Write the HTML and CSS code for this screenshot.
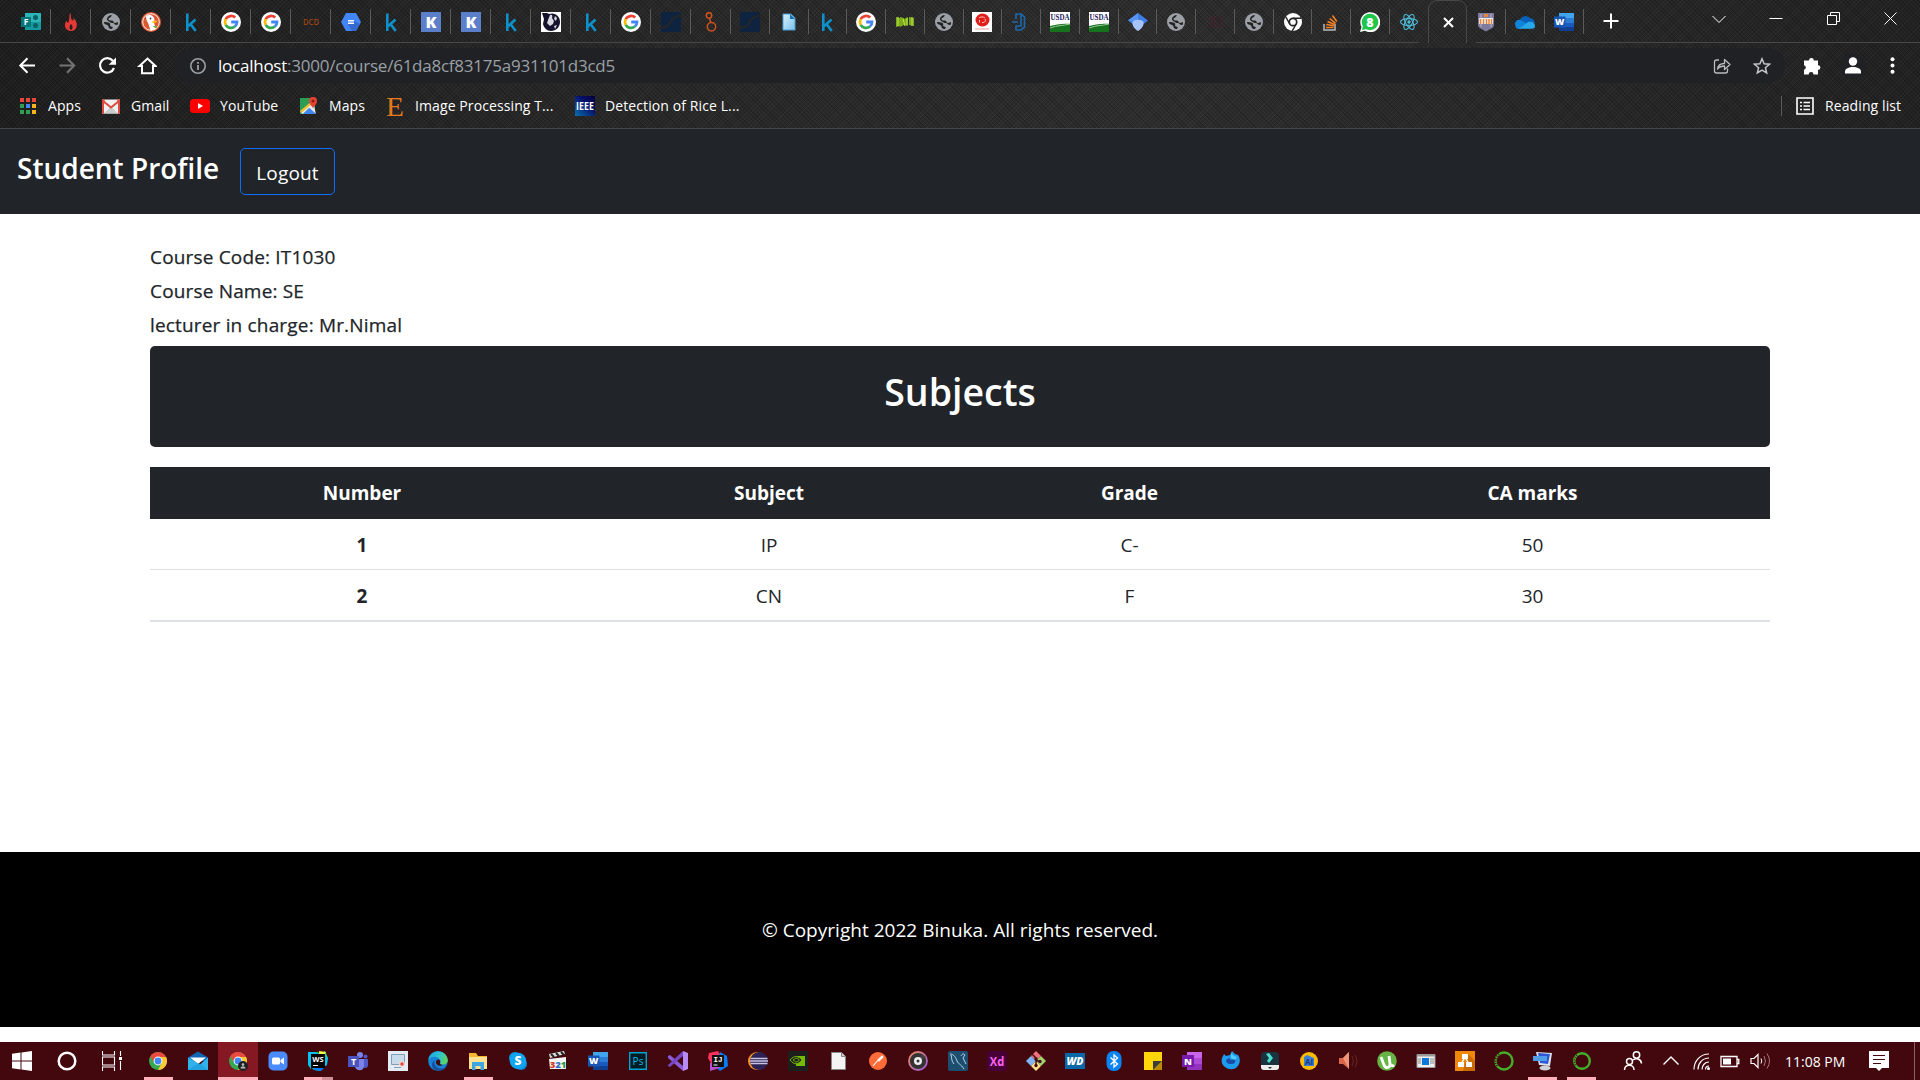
FILE: index.html
```html
<!DOCTYPE html>
<html lang="en">
<head>
<meta charset="utf-8">
<title>Student Profile</title>
<link rel="stylesheet" href="styles.css">
</head>
<body>
<svg class="sprite" aria-hidden="true">
  <defs>
    <linearGradient id="gSky" x1="0" y1="0" x2="1" y2="1"><stop offset="0" stop-color="#d8f1ff"/><stop offset="1" stop-color="#79bfe8"/></linearGradient>
    <linearGradient id="gEdge" x1="0" y1="0.2" x2="1" y2="0.6"><stop offset="0" stop-color="#1fa0dd"/><stop offset=".5" stop-color="#2cc3d2"/><stop offset="1" stop-color="#5fd65a"/></linearGradient>
    <linearGradient id="gIeee" x1="0" y1="1" x2="1" y2="0"><stop offset="0" stop-color="#0a70b0"/><stop offset=".6" stop-color="#06106a"/><stop offset="1" stop-color="#02023c"/></linearGradient>
    <linearGradient id="gRing" x1="0" y1="0" x2="1" y2="1"><stop offset="0" stop-color="#ef8a5a"/><stop offset="1" stop-color="#9a5ae0"/></linearGradient>
  </defs>
</svg>
<svg class="symbols" aria-hidden="true">
  <symbol id="kaggle" viewBox="0 0 20 20"><path d="M6.300 1.500V19M14.500 7.500L7 14.200M9.500 12l5.200 7" fill="none" stroke="#0e90ca" stroke-width="2.600"/></symbol>
  <symbol id="google" viewBox="0 0 20 20"><circle cx="10" cy="10" r="10" fill="#fff"/><g fill="none" stroke-width="2.800"><path d="M14.200 5.600A6 6 0 0 0 4.700 7.200" stroke="#ea4335"/><path d="M4.700 7.200a6 6 0 0 0 0 5.600" stroke="#fbbc05"/><path d="M4.700 12.800a6 6 0 0 0 9.200 1.700" stroke="#34a853"/><path d="M13.900 14.500A6 6 0 0 0 16 10h-5.800" stroke="#4285f4"/></g></symbol>
  <symbol id="globe" viewBox="0 0 20 20"><circle cx="10" cy="10" r="9" fill="#9aa0a6"/><path d="M11 3c-1 1-.5 2-2 2.500S7 7 8 8s3 0 4 1 .5 2 2 2 2-1 3-1c0 1 0 2-.5 3l-2-.3c-1.500-.2-1-1.700-2.500-1.700s-2.500-.3-4-1.500C7 8.800 5.500 8 6 6.500S8 3 11 3zM3 10c2 0 4 0 5.500 1s0 2.500 1 3.200 2 0 2.300 1.300L11 17c-2 0-3-.5-3.500-2 .3-1.500-1-2-2.500-2.500-1.300-.4-2-1-2-2.500z" fill="#222"/></symbol>
  <symbol id="bigk" viewBox="0 0 20 20"><path fill="#5c7fcb" d="M0 0h20v20H0z"/><text x="10" y="15.600" font-size="16" font-weight="800" text-anchor="middle" fill="#fff">K</text></symbol>
  <symbol id="navy" viewBox="0 0 20 20"><path fill="#0d2340" d="M0 0h20v20H0z"/><path d="M0 15.500c5 0 7-1 9-5s5-6 11-7" fill="none" stroke="#262626" stroke-width="2.200"/></symbol>
  <symbol id="usda" viewBox="0 0 20 20"><path fill="#fff" d="M0 0h20v20H0z"/><text x="10" y="8" font-size="8" font-weight="700" textLength="19" lengthAdjust="spacingAndGlyphs" text-anchor="middle" class="serif" fill="#26225c">USDA</text><path d="M0 14c6-1 12-3 20-2v8H0z" fill="#16721c"/><path d="M0 16c8-3 12-2 20-4" stroke="#9bc79a" fill="none"/></symbol>
  <symbol id="word" viewBox="0 0 20 20"><path fill="#41a5ee" d="M5 1h15v5H5z"/><path fill="#2b7cd3" d="M5 6h15v5H5z"/><path fill="#185abd" d="M5 11h15v4H5z"/><path fill="#103f91" d="M5 15h15v4H5z"/><path fill="#1756b5" d="M0 4.500h11.500v11H0z"/><text x="5.700" y="13.300" font-size="9" font-weight="800" text-anchor="middle" fill="#fff">W</text></symbol>
  <symbol id="chrome" viewBox="0 0 20 20"><circle cx="10" cy="10" r="9" fill="#34a853"/><path d="M10 10L2.200 5.500a9 9 0 0 1 15.600 0z" fill="#ea4a3d"/><path d="M2.200 5.500L6.500 12 10 10z" fill="#ea4a3d"/><path d="M10 6h8.100A9 9 0 0 1 10 19l3.600-7z" fill="#fcc934"/><circle cx="10" cy="10" r="4.400" fill="#fff"/><circle cx="10" cy="10" r="3.400" fill="#4285f4"/></symbol>
</svg>

<header class="browser">
  <div class="tabstrip">
    <div class="tabs wide">
      <div class="tab"><svg viewBox="0 0 20 20"><path fill="#2bb5b9" d="M4 1h16v9H4z"/><path fill="#159aa0" d="M4 10h16v8H4z"/><circle cx="14.500" cy="5.500" r="2.500" fill="#0b5f66"/><circle cx="14.500" cy="13.500" r="2.500" fill="#0b5f66"/><path fill="#03757b" d="M0 5h10v10H0z"/><text x="5" y="13" font-size="8.500" font-weight="700" text-anchor="middle" fill="#fff">F</text></svg></div>
      <div class="tab"><svg viewBox="0 0 20 20"><path d="M9 1c2 3 0 5 2 7 1 1 2 0 1.500-2 3 3 4 6 3 9-1 3-3 4-5.500 4S4.500 17.500 4 14c-.3-2.500 1-4 1-5 1 .3 1.500 1.500 2 2C9 8 8 4 9 1z" fill="#e53935"/><path d="M10 12c2 2 2 5 0 6-2-1-2-4 0-6z" fill="#222"/></svg></div>
      <div class="tab"><svg><use href="#globe"/></svg></div>
      <div class="tab"><svg viewBox="0 0 20 20"><circle cx="10" cy="10" r="10" fill="#de5833"/><circle cx="10" cy="10" r="8.300" fill="none" stroke="#fff" stroke-width=".9"/><path d="M5 4c4-2.500 8-.5 8.500 3.500L13 11l2 6-5.500 1.500L7.500 12 5.500 8z" fill="#fff"/><path d="M11 9.500l5.500-1-1.200 2-3.800.6z" fill="#fcc20f"/><path d="M11.500 14.500l4-1v3z" fill="#5fb345"/><circle cx="9.500" cy="6.500" r=".9" fill="#25406a"/></svg></div>
      <div class="tab"><svg><use href="#kaggle"/></svg></div>
      <div class="tab"><svg><use href="#google"/></svg></div>
      <div class="tab"><svg><use href="#google"/></svg></div>
      <div class="tab"><svg viewBox="0 0 20 20"><text x="10" y="13" font-size="8.500" font-weight="600" textLength="16" lengthAdjust="spacingAndGlyphs" text-anchor="middle" fill="#9a4414">DCD</text></svg></div>
      <div class="tab"><svg viewBox="0 0 20 20"><path d="M5 1h10l5 9-5 9H5L0 10z" fill="#4285f4"/><path d="M13 9l6 3-4 7h-4l-4-7z" fill="#3569cf"/><path d="M7 8.700h6M7 11.300h6" stroke="#fff" stroke-width="1.500"/></svg></div>
      <div class="tab"><svg><use href="#kaggle"/></svg></div>
      <div class="tab"><svg><use href="#bigk"/></svg></div>
      <div class="tab"><svg><use href="#bigk"/></svg></div>
      <div class="tab"><svg><use href="#kaggle"/></svg></div>
      <div class="tab"><svg viewBox="0 0 20 20"><path fill="#fff" d="M0 0h20v20H0z"/><path d="M1 1h5l2 1c6-2 11 2 11 8 0 5-4 9-9 9-4 0-7-3-8-7L3 7z" fill="#14132b"/><path d="M9 3c2-1 3 1 2 3l2 3-1 3-3 2-3-3 1-3zM14 4l2 2-1 3-2-2zM13 14l3-1-2 4z" fill="#d7d8e2"/></svg></div>
      <div class="tab"><svg><use href="#kaggle"/></svg></div>
      <div class="tab"><svg><use href="#google"/></svg></div>
      <div class="tab"><svg><use href="#navy"/></svg></div>
      <div class="tab"><svg viewBox="0 0 20 20"><g fill="none" stroke="#d0531f" stroke-width="1.500"><circle cx="8" cy="3.500" r="2.700"/><circle cx="10.500" cy="14.800" r="4.200"/><path d="M8.500 6.200l1.300 4.400"/></g></svg></div>
    </div>
    <div class="tabs narrow">
      <div class="tab"><svg><use href="#navy"/></svg></div>
      <div class="tab"><svg viewBox="0 0 20 20"><path d="M4 2h8l4 4v12H4z" fill="url(#gSky)" stroke="#4b9fd0"/><path d="M11 2v5h5z" fill="#1272b4"/></svg></div>
      <div class="tab"><svg><use href="#kaggle"/></svg></div>
      <div class="tab"><svg><use href="#google"/></svg></div>
      <div class="tab"><svg viewBox="0 0 20 20"><path d="M1 5l4 1v8l-4 1zM5 5l4 1v7l-4 2zM9 7l4-2v9l-4-1zM14 5l5 1v8l-5-1z" fill="#7cab1c"/><path d="M3 5v9M8 7l2 7M12 6v7M17 5v9" stroke="#c1e34c"/></svg></div>
      <div class="tab"><svg><use href="#globe"/></svg></div>
      <div class="tab"><svg viewBox="0 0 20 20"><path fill="#fff" d="M0 0h20v20H0z"/><ellipse cx="10.500" cy="8" rx="7" ry="6.500" fill="#df1f1b"/><path d="M7 6c2-1.500 4-1.500 6 0M7.500 10.500V8M10 10.500c3 .5 4-2 3-3.500" stroke="#fbd5d2" stroke-width=".9" fill="none"/><path d="M3 17h14" stroke="#f4c0bd" stroke-width="1.500"/></svg></div>
      <div class="tab"><svg viewBox="0 0 20 20"><path d="M5 7V2h5l3.500 3v10L10 18H5v-4h5V2M1 10h6" fill="none" stroke="#1c67a9" stroke-width="1.700"/></svg></div>
      <div class="tab"><svg><use href="#usda"/></svg></div>
      <div class="tab"><svg><use href="#usda"/></svg></div>
      <div class="tab"><svg viewBox="0 0 20 20"><path d="M0 8.500L10 1l10 7.500-5 4H5z" fill="#3f7de8"/><path d="M10 1v9L0 8.500z" fill="#5a95f5"/><path d="M4.500 10c2-3 9-3 11 0 .5 4-2 7-5.500 9-3.500-2-6-5-5.500-9z" fill="#a5c4fb"/></svg></div>
      <div class="tab"><svg><use href="#globe"/></svg></div>
      <div class="tab"><svg viewBox="0 0 20 20"><text x="10" y="15" font-size="15" textLength="14" lengthAdjust="spacingAndGlyphs" text-anchor="middle" class="serif" fill="#4a1c2b">JEI</text></svg></div>
      <div class="tab"><svg><use href="#globe"/></svg></div>
      <div class="tab"><svg viewBox="0 0 20 20"><circle cx="10" cy="10" r="9" fill="#fff"/><circle cx="10" cy="10" r="3.700" fill="none" stroke="#222" stroke-width="1.700"/><path d="M10 6.300h8M6.800 12L2.800 5M13.200 12l-4 7" stroke="#222" stroke-width="1.500"/></svg></div>
      <div class="tab"><svg viewBox="0 0 20 20"><path d="M3 12v6h11v-6" fill="none" stroke="#bcbbbb" stroke-width="1.500"/><path d="M5 15.500h7.500M5.200 12.500l7.500 1.300M6.500 9.500l7 3M8.700 6.500l5.800 4.800M11.500 3.500l4.300 6" stroke="#f48024" stroke-width="1.600"/></svg></div>
      <div class="tab"><svg viewBox="0 0 20 20"><path d="M0 20l1.500-5A10 10 0 1 1 5 18.700z" fill="#fff"/><circle cx="10" cy="10" r="8.300" fill="#1fc64a"/><path d="M2 18l1-5 4 4z" fill="#1fc64a"/><text x="10" y="14.500" font-size="12.500" font-weight="800" text-anchor="middle" fill="#fff">8</text></svg></div>
    </div>
    <div class="tab last"><svg viewBox="0 0 20 20"><g fill="none" stroke="#50bdd8" stroke-width="1.100"><ellipse cx="10" cy="10" rx="8.500" ry="3.400"/><ellipse cx="10" cy="10" rx="8.500" ry="3.400" transform="rotate(60 10 10)"/><ellipse cx="10" cy="10" rx="8.500" ry="3.400" transform="rotate(120 10 10)"/></g><circle cx="10" cy="10" r="1.700" fill="#50bdd8"/></svg></div>
    <div class="tab active"><svg viewBox="0 0 20 20"><path d="M6 6l9 9M15 6l-9 9" stroke="#fff" stroke-width="2"/></svg></div>
    <div class="tabs after">
      <div class="tab"><svg viewBox="0 0 20 20"><path d="M2 1h16v12c0 3-4 4-8 6.500C6 17 2 16 2 13z" fill="#7e7b9e"/><path d="M5 2v13M15 2v13" stroke="#b7b4cd"/><path fill="#eee" d="M3 6h14v6H3z"/><path d="M4.500 7v5M7.500 7v5M10.500 7v5M13 7v5M15.500 7v5" stroke="#e8863c" stroke-width="1.500"/><path fill="#e8863c" d="M8 2h4v3H8z"/></svg></div>
      <div class="tab"><svg viewBox="0 0 20 20"><path d="M5 8a6 6 0 0 1 10-2c3 0 5 3 5 5l-8 3-9-1z" fill="#0a62b8"/><path d="M0 12a4 4 0 0 1 5-4l6 3-6 6H4c-2 0-4-2-4-5z" fill="#1184dc"/><path d="M4 16.700L13 10c4-1 7 1 7 4 0 2-1 2.700-3 2.700z" fill="#28a8ea"/></svg></div>
      <div class="tab"><svg><use href="#word"/></svg></div>
    </div>
    <svg class="newtab" viewBox="0 0 16 16"><path d="M8 .5v15M.5 8h15" stroke="#fff" stroke-width="2"/></svg>
    <div class="winctl">
      <svg viewBox="0 0 14 14"><path d="M.5 4L7 10.500 13.500 4" fill="none" stroke="#fff"/></svg>
      <svg viewBox="0 0 14 14"><path d="M.5 6.500h13" stroke="#fff"/></svg>
      <svg viewBox="0 0 14 14"><path d="M1.500 3.500h9v9h-9zM4.500 3.500v-3h9v9h-3" fill="none" stroke="#fff"/></svg>
      <svg viewBox="0 0 14 14"><path d="M1.500.5l12 12M13.500.5l-12 12" stroke="#fff"/></svg>
    </div>
  </div>

  <div class="toolbar">
    <div class="nav">
      <svg viewBox="0 0 20 20"><path d="M18 9.500H3.500M10.500 2.300L3.300 9.500l7.200 7.200" fill="none" stroke="#fff" stroke-width="2"/></svg>
      <svg viewBox="0 0 20 20"><path d="M2.500 9.500H17M10 2.300l7.200 7.200-7.200 7.200" fill="none" stroke="#747474" stroke-width="2"/></svg>
      <svg viewBox="0 0 20 20"><path d="M17 12a7.200 7.200 0 1 1-1-7" fill="none" stroke="#fff" stroke-width="2.200"/><path d="M19 1.500v7.300h-7.300z" fill="#fff"/></svg>
      <svg viewBox="0 0 20 20"><path d="M5 9.500v7.800h11V9.500M2.500 10l8-7.500 8 7.500z" fill="none" stroke="#fff" stroke-width="2"/><path d="M6 9h9v2.500H6z" fill="#222"/></svg>
    </div>
    <div class="omnibox">
      <svg class="info" viewBox="0 0 18 18"><circle cx="9" cy="9" r="7.200" fill="none" stroke="#9aa0a6" stroke-width="1.600"/><path d="M9 8v5M9 5v1.800" stroke="#9aa0a6" stroke-width="1.800"/></svg>
      <div class="url"><b>localhost</b>:3000/course/61da8cf83175a931101d3cd5</div>
      <svg class="share" viewBox="0 0 18 18"><path d="M6 3H3.500Q1.500 3 1.500 5v9q0 2 2 2h9q2 0 2-2v-2.500M4.500 12c.5-4 3-5.500 7-5.500v-4l5.500 5-5.500 5V9c-3 0-5 .5-7 3z" fill="none" stroke="#b9bbbe" stroke-width="1.300" stroke-linejoin="round"/></svg>
      <svg class="star" viewBox="0 0 18 18"><path d="M9 1.800l2.100 5 5.400.4-4.100 3.500 1.300 5.300L9 13.200 4.300 16l1.300-5.300-4.100-3.500 5.400-.4z" fill="none" stroke="#c3c5c8" stroke-width="1.500"/></svg>
    </div>
    <div class="actions">
      <svg viewBox="0 0 20 20"><path d="M2 4.500h5a2.300 2.300 0 1 1 4.800 0H16v4.700a2.300 2.300 0 1 1 0 4.800v4.500h-4.500a2.300 2.300 0 0 0-4.800 0H2v-4.800a2.300 2.300 0 0 0 0-4.500z" fill="#fff"/></svg>
      <svg class="avatar" viewBox="0 0 26 26"><circle cx="13" cy="13" r="13" fill="#202124"/><circle cx="13" cy="8.500" r="4.200" fill="#fff"/><path d="M5 20.500v-2c0-3 4-4.500 8-4.500s8 1.500 8 4.500v2z" fill="#fff"/></svg>
      <svg viewBox="0 0 20 20"><g fill="#fff"><circle cx="10.500" cy="3.300" r="2"/><circle cx="10.500" cy="9.500" r="2"/><circle cx="10.500" cy="15.700" r="2"/></g></svg>
    </div>
  </div>

  <div class="bookmarks">
    <div class="bm bm-apps"><svg viewBox="0 0 20 20"><g fill="#e8453c"><path d="M2 2h4v4H2zM8 2h4v4H8zM14 2h4v4h-4z"/></g><path fill="#2f9e50" d="M2 8h4v4H2zM2 14h4v4H2z"/><path fill="#4285f4" d="M8 8h4v4H8z"/><path fill="#2f9e50" d="M8 14h4v4H8z"/><path fill="#f6b51e" d="M14 8h4v4h-4zM14 14h4v4h-4z"/></svg><span>Apps</span></div>
    <div class="bm bm-gmail"><svg viewBox="0 0 20 20"><path fill="#f1f1f1" d="M1 3.500h18v14H1z"/><path fill="#ccc" d="M3 17.500l7-7 7 7z"/><path d="M2 17.500V5l8 6.500L18 5v12.500" fill="none" stroke="#dd4b3e" stroke-width="2"/><path fill="#dd4b3e" d="M1 3.500h3l-1 3zM19 3.500h-3l1 3z"/></svg><span>Gmail</span></div>
    <div class="bm bm-yt"><svg viewBox="0 0 20 20"><rect y="3" width="20" height="14" rx="3.500" fill="#f00"/><path d="M8 7l5 3-5 3z" fill="#fff"/></svg><span>YouTube</span></div>
    <div class="bm bm-maps"><svg viewBox="0 0 20 20"><path fill="#2c9d55" d="M1 2h15v16H1z"/><path fill="#e8eaed" d="M2 17L14 6l3 12-7-6-6 6z"/><path fill="#4285f4" d="M4 18l6.500-6 6.500 6z"/><path fill="#fbc02d" d="M1 15L13 5l1 2L2 17z"/><path d="M14 13c0-3-4-4-4-8a4 4 0 0 1 8 0c0 4-4 5-4 8z" fill="#e64335"/><circle cx="14" cy="5" r="1.500" fill="#8c1d18"/></svg><span>Maps</span></div>
    <div class="bm bm-image"><svg viewBox="0 0 20 20"><text x="10" y="19.500" font-size="28" textLength="18" lengthAdjust="spacingAndGlyphs" text-anchor="middle" class="serif" fill="#e37a1c">E</text></svg><span>Image Processing T...</span></div>
    <div class="bm bm-ieee"><svg viewBox="0 0 20 20"><path fill="url(#gIeee)" d="M0 0h20v20H0z"/><text x="10" y="14" font-size="11" font-weight="700" textLength="18" lengthAdjust="spacingAndGlyphs" text-anchor="middle" fill="#fff">IEEE</text></svg><span>Detection of Rice L...</span></div>
    <div class="bm bm-reading"><svg viewBox="0 0 20 20"><path d="M2 2h16v16H2z" fill="none" stroke="#fff" stroke-width="1.600"/><path d="M5 6.500h2M5 10h2M5 13.500h2M8.500 6.500H15M8.500 10H15M8.500 13.500H15" stroke="#fff" stroke-width="1.600"/></svg><span>Reading list</span></div>
  </div>
</header>

<nav class="appbar">
  <h1>Student Profile</h1>
  <button class="logout">Logout</button>
</nav>

<main class="content">
  <h5>Course Code: IT1030</h5>
  <h5>Course Name: SE</h5>
  <h5 class="lecturer">lecturer in charge: Mr.Nimal</h5>
  <div class="banner"><h2>Subjects</h2></div>
  <table>
    <colgroup><col class="c-number"><col class="c-subject"><col class="c-grade"><col class="c-marks"></colgroup>
    <thead><tr><th>Number</th><th>Subject</th><th>Grade</th><th>CA marks</th></tr></thead>
    <tbody>
      <tr><th>1</th><td>IP</td><td>C-</td><td>50</td></tr>
      <tr><th>2</th><td>CN</td><td>F</td><td>30</td></tr>
    </tbody>
  </table>
</main>

<footer class="footer"><p>© Copyright 2022 Binuka. All rights reserved.</p></footer>

<div class="taskbar">
  <div class="system">
    <svg viewBox="0 0 20 20"><path d="M0 2.800l8.500-1.200v8H0zM9.500 1.500L20 0v9.600H9.500zM0 10.500h8.500v8L0 17.300zM9.500 10.500H20V20L9.500 18.600z" fill="#fff"/></svg>
    <svg viewBox="0 0 20 20"><circle cx="10" cy="10" r="8.300" fill="none" stroke="#fff" stroke-width="2.500"/></svg>
    <svg viewBox="0 0 20 20"><path d="M.5 0v4h12V0M.5 20v-4h12v4M.5 6h12v8H.5zM18.500 0v5M18.500 10v9" fill="none" stroke="#fff" stroke-width="1.100"/><path fill="#fff" d="M17 6h3v3h-3z"/></svg>
  </div>
  <div class="apps pinned">
    <div class="app run"><svg><use href="#chrome"/></svg></div>
    <div class="app"><svg viewBox="0 0 20 20"><path fill="#0f66b4" d="M0 6.500L10 .5l10 6V10H0z"/><path fill="#fff" d="M2 6.500h16L10 13z"/><path fill="#2fb3ea" d="M0 6.500l12 7 8-7V19H0z"/><path fill="#1a94dc" d="M0 19L11 12l9 7z" opacity=".5"/></svg></div>
    <div class="app focus"><svg viewBox="0 0 20 20"><use href="#chrome"/><circle cx="15" cy="15" r="5" fill="#202124"/><path d="M12.500 17.500c0-3 5-3 5 0zM15 12.200a1.300 1.300 0 1 1 0 2.700 1.300 1.300 0 0 1 0-2.700" fill="#bbb"/></svg></div>
    <div class="app"><svg viewBox="0 0 20 20"><rect x=".5" y=".5" width="19" height="19" rx="5" fill="#4a8cff"/><rect x="4" y="6.500" width="8" height="7" rx="1.500" fill="#fff"/><path d="M12.500 9l3.500-2.500v7L12.500 11z" fill="#fff"/></svg></div>
    <div class="app run multi"><svg viewBox="0 0 20 20"><path fill="#21d789" d="M1 2l9-1 2 3 5-4 3 7-3 8-5 5-6-1-5-5z"/><path fill="#07c3f2" d="M0 1h7l5 2-9 15-3-4zM17 5l3 2-1 7-3 2z"/><path fill="#fcf84a" d="M11 0l7 1-2 4-5-1z"/><path fill="#087cfa" d="M5 16h12l-4 4-7-1z"/><path fill="#000" d="M3 3h14v14H3z"/><text x="10" y="10.500" font-size="7.500" font-weight="700" text-anchor="middle" fill="#fff">WS</text><path fill="#fff" d="M5 14h5v1H5z"/></svg></div>
    <div class="app"><svg viewBox="0 0 20 20"><circle cx="12" cy="4" r="3" fill="#7b83eb"/><circle cx="17.500" cy="5.500" r="2" fill="#5059c9"/><path fill="#5059c9" d="M13 8h7v6c0 3-3 4-5 2z"/><path fill="#7b83eb" d="M7 8h9v7c0 5-7 6-9 1z"/><path fill="#4b53bc" d="M0 5h11v11H0z"/><text x="5.500" y="14" font-size="9" font-weight="700" text-anchor="middle" fill="#fff">T</text></svg></div>
    <div class="app"><svg viewBox="0 0 20 20"><path fill="#e4ebf2" d="M0 0h20v20H0z"/><path d="M3.500 3.500h13v10h-13zM6 16.500h7" fill="#c7dbea" stroke="#7f9fb8"/><circle cx="14" cy="13" r="3" fill="#f3d7d5"/><circle cx="14" cy="13" r="1.700" fill="#e0443c"/></svg></div>
    <div class="app"><svg viewBox="0 0 20 20"><circle cx="10" cy="10" r="9.800" fill="#1583d6"/><path d="M.3 9C1 3 6 0 10 .2c6 0 10 5 9.800 9.300-.3 3-3 4.500-6 4-2-.5-2-1.500-1-3C12 7 8 5 5 6 3 6.500 1 8 .3 9z" fill="url(#gEdge)"/><path d="M7 9c-2 4 1 8 5 8.500 3 .3 5-.5 6.500-2-2 4-8 5.500-12 3C3 16 3 11 7 9z" fill="#1b4f9e"/><path d="M10 8.500c2 0 2.500 1.500 2 3-.6 1.500 1 2.500 3 2.500-3 1.500-7 .5-7-2.500 0-1.500.8-3 2-3z" fill="#43080e"/></svg></div>
    <div class="app run"><svg viewBox="0 0 20 20"><path fill="#f5b82e" d="M1 2h7l2 3h9v12H1z"/><path fill="#fde293" d="M1 6h18v12H1z"/><path fill="#3ea6e0" d="M4 19v-8h12v8h-3.500v-4h-5v4z"/></svg></div>
    <div class="app"><svg viewBox="0 0 20 20"><circle cx="7" cy="7" r="6" fill="#0a9be8"/><circle cx="13" cy="13" r="6" fill="#0a8be0"/><circle cx="10" cy="10" r="8.300" fill="#12a5ee"/><text x="10" y="14.300" font-size="12" font-weight="800" text-anchor="middle" fill="#fff">S</text></svg></div>
    <div class="app"><svg viewBox="0 0 20 20"><path fill="#ddd" d="M1 3l15-3 1 3L2 7z"/><path d="M3 3l3 3M8 2l3 3M13 1l3 3" stroke="#222" stroke-width="2"/><path fill="#f4f4f4" d="M1 8l17-2v12H2z"/><text x="10" y="17" font-size="9.500" font-weight="800" text-anchor="middle" fill="#2c6fc0"><tspan fill="#d53c25">3</tspan>2<tspan fill="#2d9b3c">1</tspan></text></svg></div>
    <div class="app"><svg><use href="#word"/></svg></div>
    <div class="app"><svg viewBox="0 0 20 20"><path d="M1.700 1.700h16.600v16.600H1.700z" fill="#001d26" stroke="#00a6cf" stroke-width="1.400"/><text x="10" y="13.500" font-size="10" text-anchor="middle" fill="#14b9e6">Ps</text></svg></div>
    <div class="app"><svg viewBox="0 0 20 20"><path fill="#8a5bd6" d="M0 5l2-1 13 11v5L0 7z"/><path fill="#7746c4" d="M0 14L15 0v5L2 16l-2-1z"/><path fill="#b98bf5" d="M15 0l5 2v16l-5 2z"/></svg></div>
    <div class="app"><svg viewBox="0 0 20 20"><path fill="#fe315d" d="M1 2l9-2 3 5-9 9-4-7z"/><path fill="#087cfa" d="M12 1l7 4 1 10-8 5-4-4z"/><path fill="#b64fd0" d="M2 12h8l2 5-10 3z"/><path fill="#111" d="M4 4h12v12H4z"/><text x="10" y="11" font-size="7.500" font-weight="700" class="mono" text-anchor="middle" fill="#fff">IJ</text><path fill="#fff" d="M5.500 13.500h4v1h-4z"/></svg></div>
    <div class="app"><svg viewBox="0 0 20 20"><circle cx="9" cy="10" r="9" fill="#f7941e"/><circle cx="11" cy="10" r="9" fill="#2c2255"/><path d="M2.500 7.500h17M2 10h18M2.500 12.500h17" stroke="#c9c3e4" stroke-width="1.300"/></svg></div>
    <div class="app"><svg viewBox="0 0 20 20"><path fill="#1c1f1c" d="M0 0h20v20H0z"/><path fill="#76b900" d="M8 5h9v10H8z"/><path d="M2 9c4-5 9-4 12 0-4 5-8 5-12 0zM5 9c2-2 5-2 6.500 0-2 2.500-4.500 2.500-6.500 0z" fill="#1c1f1c" stroke="#76b900"/></svg></div>
    <div class="app"><svg viewBox="0 0 20 20"><path d="M3.500 1.500h10l4 4v13h-14z" fill="#f4f4f4" stroke="#888"/><path d="M13.500 1.500v4h4" fill="#ccc" stroke="#888"/></svg></div>
    <div class="app"><svg viewBox="0 0 20 20"><circle cx="10" cy="10" r="9" fill="#ff6c37"/><path d="M5 15l6-7M10 9l4-4 1 1-4 4z" stroke="#fff" fill="#fff" stroke-width="1.100"/></svg></div>
    <div class="app"><svg viewBox="0 0 20 20"><circle cx="10" cy="10" r="9" fill="#333" stroke="url(#gRing)" stroke-width="1.800"/><path d="M11 9l3-6 4 3z" fill="#444"/><circle cx="10" cy="10" r="4" fill="#eee"/><circle cx="10" cy="10" r="1.500" fill="#333"/></svg></div>
    <div class="app"><svg viewBox="0 0 20 20"><rect width="20" height="20" rx="2" fill="#1d4e70"/><path d="M2 3c4 0 6 4 7 7s4 3 7 8M3 4c1 3 0 5 3 9M13 5c1-2 3-3 4-1l-2 3 3 6" fill="none" stroke="#b9d8ea"/></svg></div>
  </div>
  <div class="apps rest">
    <div class="app"><svg viewBox="0 0 20 20"><rect width="20" height="20" rx="3" fill="#470137"/><text x="10" y="14.500" font-size="12" font-weight="700" textLength="14.500" lengthAdjust="spacingAndGlyphs" text-anchor="middle" fill="#ff61f6">Xd</text></svg></div>
    <div class="app"><svg viewBox="0 0 20 20"><path fill="#f07178" d="M10 0l5 5-5 5-5-5z"/><path fill="#80b5f5" d="M5 5l5 5-5 5-5-5z"/><path fill="#a3d46e" d="M15 5l5 5-5 5-5-5z"/><path fill="#ffe08a" d="M10 10l5 5-5 5-5-5z"/><path d="M6 3l4 4v9M10 9l4 2" stroke="#431018" stroke-width="1.500" fill="none"/><circle cx="10" cy="8" r="1.700" fill="#431018"/><circle cx="10" cy="14.500" r="1.700" fill="#431018"/><circle cx="14" cy="10.500" r="1.700" fill="#431018"/></svg></div>
    <div class="app"><svg viewBox="0 0 20 20"><path fill="#0a67a8" d="M0 2h20v16H0z"/><text x="10" y="13.800" font-size="10" font-weight="800" font-style="italic" textLength="17" lengthAdjust="spacingAndGlyphs" text-anchor="middle" fill="#fff">WD</text></svg></div>
    <div class="app"><svg viewBox="0 0 20 20"><rect x="2.500" width="15" height="20" rx="7" fill="#0a84f5"/><path d="M6.500 6.500l7 6.500-3.500 3V4l3.500 3-7 6.500" fill="none" stroke="#fff" stroke-width="1.300"/></svg></div>
    <div class="app"><svg viewBox="0 0 20 20"><path fill="#ffd60a" d="M1 1h18v18H1z"/><path fill="#b98a00" d="M10 19h9v-9z"/><path fill="#3b3b3b" d="M10 10h9l-9 9z"/></svg></div>
    <div class="app"><svg viewBox="0 0 20 20"><path fill="#ca64ea" d="M5 1h15v6H5z"/><path fill="#ae4bd5" d="M5 7h15v6H5z"/><path fill="#9332bf" d="M5 13h15v6H5z"/><path fill="#7719aa" d="M0 4h12v12H0z"/><text x="6" y="13.500" font-size="9.500" font-weight="800" text-anchor="middle" fill="#fff">N</text></svg></div>
    <div class="app"><svg viewBox="0 0 20 20"><path d="M1 7l2-4 2 2 4-1 2-4 3 3 3 1c3 4 2 9-1 12-3 3-8 3-12 0C1 14 0 11 1 7z" fill="#1c9cf0"/><path d="M5 9l3-2 2 2 4-1c1 3 0 5-4 5s-5-2-5-4z" fill="#1b4da8"/><path d="M10 2l3 3 3 1-2 3-4-2z" fill="#52cdfa"/></svg></div>
    <div class="app"><svg viewBox="0 0 20 20"><rect x="1" y="1" width="18" height="18" rx="4" fill="#1a3340"/><path d="M6 3l3-1 4 5-4 5-2-2 2-3z" fill="#48e0cd"/><path d="M1 14h18v2c0 2-1 3-3 3H4c-2 0-3-1-3-3z" fill="#eee"/><path fill="#333" d="M8 16h4l-2 2z"/></svg></div>
    <div class="app"><svg viewBox="0 0 20 20"><circle cx="10" cy="10" r="9" fill="#fbbc05"/><path fill="#3c7dd6" d="M5 6l3-2 7 3v8H5z"/><text x="10" y="14" font-size="8" font-weight="700" text-anchor="middle" fill="#173a77">AI</text></svg></div>
    <div class="app"><svg viewBox="0 0 20 20"><path d="M1 7h4l6-6v17l-6-5H1z" fill="#d9664a"/><path d="M5 7l6-6v17z" fill="#f0977b"/><path d="M14 5q3 5 0 10M17 4q4 6 0 12" fill="none" stroke="#6d2520"/></svg></div>
    <div class="app"><svg viewBox="0 0 20 20"><circle cx="10" cy="10" r="9.800" fill="#66b346"/><path d="M4 6l3 8c2 4 6 3 6-1l-1-8M13 13c1 2 3 2 4 1" stroke="#fff" stroke-width="2.800" fill="none"/></svg></div>
    <div class="app"><svg viewBox="0 0 20 20"><path fill="#f0f0f0" stroke="#999" d="M1 3.500h18v13H1z"/><path fill="#999" d="M1 3h18v2.500H1z"/><path fill="#0b79d8" d="M6 7h7v7H6z"/><path d="M2 8h3M2 10h3M2 12h3M14 8h4M14 10h4M14 12h4" stroke="#888"/></svg></div>
    <div class="app"><svg viewBox="0 0 20 20"><path fill="#f08705" d="M0 0h20v20H0z"/><path fill="#c96b00" d="M13 3l7 7v10H8z"/><path d="M10 6l-5 9M10 6l5 9" stroke="#fff" stroke-width="1.500"/><path fill="#fff" d="M7 3h6v5H7zM3 11h6v5H3zM11 11h6v5h-6z"/></svg></div>
    <div class="app"><svg viewBox="0 0 20 20"><circle cx="10" cy="10" r="8.500" fill="none" stroke="#43b02a" stroke-width="2.400"/><path d="M5 3a8.500 8.500 0 0 0-2 12" fill="none" stroke="#43080e" stroke-width="2" stroke-dasharray="1 1.500"/></svg></div>
    <div class="app run"><svg viewBox="0 0 20 20"><path fill="#dce3ea" d="M3 1l16 1-2 13-11-1z"/><path fill="#2f56d8" d="M5 2l12 1-2 10-8-1z"/><path fill="#4e9fe8" d="M0 5h14v5H0z"/><ellipse cx="12" cy="17" rx="5.500" ry="2.500" fill="#ccd2d8"/></svg></div>
    <div class="app run"><svg viewBox="0 0 20 20"><circle cx="10" cy="10" r="7.800" fill="none" stroke="#43b02a" stroke-width="2.400"/><path d="M5 4a8 8 0 0 0-1 11" fill="none" stroke="#43080e" stroke-width="1.200" stroke-dasharray="1 1.500"/></svg></div>
  </div>
  <div class="tray">
    <svg class="people" viewBox="0 0 20 20"><g fill="none" stroke="#fff" stroke-width="1.500"><circle cx="13.500" cy="4" r="3.200"/><circle cx="6.500" cy="10.500" r="3"/><path d="M1.500 19c0-6.500 9.500-6.500 9.500 0M10 9c3-2.500 8-1.500 8.500 3.500"/></g></svg>
    <svg class="up" viewBox="0 0 18 18"><path d="M1.500 12.500L9 5l7.500 7.500" fill="none" stroke="#fff" stroke-width="1.400"/></svg>
    <svg class="wifi" viewBox="0 0 18 18"><g fill="none" stroke="#fff" stroke-width="1.200"><path d="M1 17.500C1 9 7 2 16 2M5 17.500C5 11 9.500 6 16 6M9 17.500c0-4 3-7.500 7-7.500M12.500 17.500c0-2 1.500-3.500 3.500-3.500"/></g><circle cx="15.500" cy="16.500" r="1.500" fill="#fff"/></svg>
    <svg class="battery" viewBox="0 0 20 20"><path d="M1 5.500h16v10H1zM17.500 8.500h1.300v4h-1.300" fill="none" stroke="#fff" stroke-width="1.300"/><path fill="#fff" d="M3 7.500h8v6H3z"/></svg>
    <svg class="sound" viewBox="0 0 22 20"><path d="M2 7.500h3l4-4v13l-4-4H2z" fill="none" stroke="#fff" stroke-width="1.200"/><path d="M12 7.500q1.500 2.500 0 5" fill="none" stroke="#fff"/><path d="M15 5q3 5 0 10M18 2.500q5 7.500 0 15" fill="none" stroke="#a4777c"/></svg>
    <span class="clock">11:08 PM</span>
    <svg class="note" viewBox="0 0 20 20"><path d="M0 0h20v17h-7l-3 3-3-3H0z" fill="#fff"/><path d="M4 4.500h12M4 8.500h12M4 12.500h8" stroke="#43080e" stroke-width="1.100"/></svg>
  </div>
</div>
</body>
</html>
```

FILE: styles.css
```css
* { box-sizing: border-box; }

body {
  margin: 0;
  width: 1920px;
  height: 1080px;
  overflow: hidden;
  display: flex;
  flex-direction: column;
  background: #fff;
  color: #212529;
  font-family: "Open Sans", "Noto Sans", sans-serif;
}

svg { display: block; flex: none; }
.sprite { width: 0; height: 0; position: absolute; }
.symbols { display: none; }
.serif { font-family: "Liberation Serif", serif; }
.mono { font-family: "Liberation Mono", monospace; }

/* Browser window */
.browser {
  height: 129px;
  flex: none;
  border-bottom: 1px solid #46474a;
  background:
    repeating-linear-gradient(45deg, rgba(0, 0, 0, .18) 0 1px, transparent 1px 3px),
    repeating-linear-gradient(-45deg, rgba(255, 255, 255, .03) 0 1px, transparent 1px 3px),
    linear-gradient(90deg, #1e1e1e, #262626 25%, #2d2d2d 60%, #282828 80%, #222);
}

.tabstrip {
  height: 43px;
  padding-left: 11px;
  display: flex;
  background: linear-gradient(#46484a, #46484a) 0 42px / 1419px 1px no-repeat,
    linear-gradient(#46484a, #46484a) 1476px 42px / 444px 1px no-repeat;
}
.tabs { display: flex; }
.wide { width: 720px; }
.narrow { width: 659px; }
.after { width: 117px; }
.tab {
  flex: 1;
  height: 25px;
  margin-top: 9px;
  display: flex;
  align-items: center;
  justify-content: center;
  border-right: 1px solid #5a5a5a;
}
.tab svg { width: 20px; height: 20px; }
.tab.last { flex: none; width: 38px; border-right: 0; }
.tab.active {
  flex: none;
  width: 39px;
  height: 43px;
  margin-top: 0;
  border: 1px solid #46484a;
  border-bottom: 0;
  border-radius: 9px 9px 0 0;
}
.newtab { width: 16px; height: 16px; margin: 13px 0 0 19px; }
.winctl { display: flex; gap: 43px; margin: 12px 0 0 93px; }
.winctl svg { width: 14px; height: 14px; }

.toolbar { height: 45px; padding: 5px 0 5px 17px; display: flex; align-items: center; }
.nav { display: flex; gap: 20px; width: 158px; }
.nav svg { width: 20px; height: 20px; }
.omnibox {
  width: 1610px;
  height: 35px;
  padding: 0 14px;
  border-radius: 18px;
  background: #202124;
  display: flex;
  align-items: center;
}
.info { width: 18px; height: 18px; }
.url { margin-left: 11px; flex: 1; font-size: 17px; line-height: 24px; letter-spacing: -.24px; color: #9aa0a6; }
.url b { color: #fff; font-weight: 400; }
.share, .star { width: 18px; height: 18px; }
.share { margin-right: 22px; }
.actions { display: flex; align-items: center; margin-left: 17px; }
.actions svg { width: 20px; height: 20px; }
.actions .avatar { width: 26px; height: 26px; margin: 0 16px 0 18px; }

.bookmarks {
  height: 36px;
  padding-left: 18px;
  display: flex;
  align-items: center;
  color: #fff;
  font-size: 14px;
  letter-spacing: .1px;
}
.bm { display: flex; align-items: center; gap: 10px; white-space: nowrap; }
.bm svg { width: 20px; height: 20px; }
.bm span { padding-bottom: 2px; }
.bm-apps { width: 83px; }
.bm-gmail { width: 89px; }
.bm-yt { width: 109px; }
.bm-maps { width: 86px; }
.bm-image { width: 190px; }
.bm-ieee { width: 1206px; }
.bm-reading { height: 20px; padding-left: 13px; border-left: 1px solid #5a5a5a; }

/* Application page */
.appbar {
  height: 85px;
  flex: none;
  padding: 19px 17px 0;
  display: flex;
  background: #212529;
  color: #fff;
}
.appbar h1 { width: 223px; margin: 0; font-size: 28px; line-height: 40px; font-weight: 600; white-space: nowrap; }
.logout {
  width: 95px;
  height: 47px;
  padding: 3px 0 0;
  border: 1px solid #0d6efd;
  border-radius: 5px;
  background: none;
  color: #fff;
  font: 400 19px "Open Sans", sans-serif;
  letter-spacing: .15px;
}

.content { height: 638px; flex: none; padding: 26px 150px 0; }
h5 {
  margin: 0;
  font-size: 19px;
  line-height: 34px;
  font-weight: 500;
  letter-spacing: .17px;
  -webkit-text-stroke: .25px #212529;
}
.lecturer { margin-bottom: 4px; }
.banner { height: 101px; margin-bottom: 20px; padding-top: 17px; border-radius: 5px; background: #212529; }
.banner h2 { margin: 0; color: #fff; font-size: 37.500px; line-height: 58px; font-weight: 600; text-align: center; }

table { width: 1620px; table-layout: fixed; border-collapse: separate; border-spacing: 0; font-size: 19px; line-height: 30px; }
.c-number { width: 424px; }
.c-subject { width: 390px; }
.c-grade { width: 331px; }
.c-marks { width: 475px; }
th, td { height: 51px; padding: 1px 0 0; text-align: center; }
thead th { height: 52px; background: #212529; color: #fff; padding: 0; }
tbody th, tbody td { border-bottom: 1px solid #dee2e6; }
tbody tr:last-child > * { height: 52px; border-bottom-width: 2px; }

.footer { height: 175px; flex: none; padding-top: 63px; background: #000; color: #fff; text-align: center; }
.footer p { margin: 0; font-size: 19px; line-height: 30px; letter-spacing: .02px; }

/* Windows taskbar */
.taskbar { height: 38px; flex: none; margin-top: 15px; display: flex; background: #43080e; color: #fff; }
.system { width: 138px; padding-left: 12px; display: flex; align-items: center; gap: 25px; }
.system svg { width: 20px; height: 20px; }
.apps { display: flex; }
.pinned { width: 840px; }
.rest { width: 624px; margin-left: -1px; }
.app { flex: 1; display: flex; align-items: center; justify-content: center; }
.app svg { width: 20px; height: 20px; }
.app.run { background: linear-gradient(#ffb0bb, #ffb0bb) center bottom / 29px 3px no-repeat; }
.app.multi { background: linear-gradient(90deg, #ffb0bb 18px, #cf8f98 18px) center bottom / 29px 3px no-repeat; }
.app.focus { background: #861823; border-bottom: 3px solid #ffb0bb; padding-top: 3px; }
.tray { flex: 1; display: flex; align-items: center; padding-left: 22px; margin-right: 5px; border-right: 1px solid #8a6266; }
.people { width: 20px; height: 20px; margin-right: 19px; }
.up { width: 18px; height: 18px; margin-right: 13px; }
.wifi { width: 18px; height: 18px; margin-right: 9px; }
.battery { width: 20px; height: 20px; margin-right: 9px; }
.sound { width: 22px; height: 20px; margin-right: 14px; }
.clock { width: 84px; font-size: 14px; white-space: nowrap; }
.note { width: 20px; height: 20px; }
```
